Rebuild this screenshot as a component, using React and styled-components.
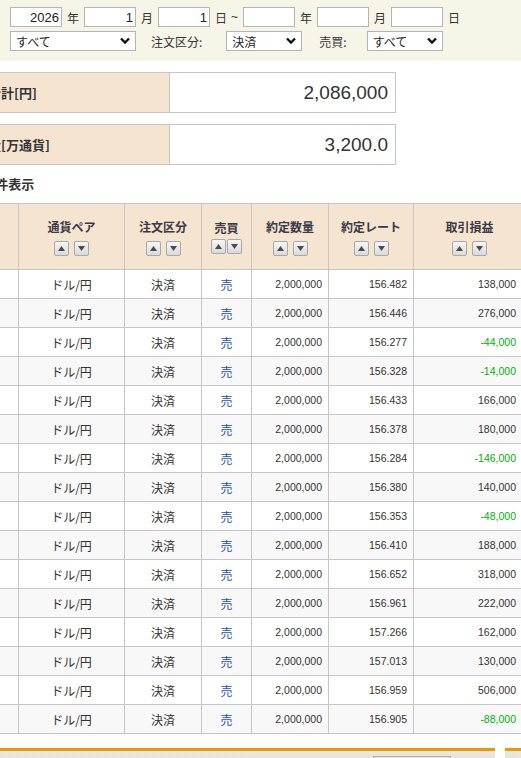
import * as React from 'react';
import styled, { createGlobalStyle } from 'styled-components';

const GlobalStyle = createGlobalStyle`
  html, body {
    margin: 0;
    padding: 0;
    background: #fff;
    overflow: hidden;
  }
  body {
    font-family: "Liberation Sans", "Noto Sans CJK JP", sans-serif;
    font-size: 12px;
    color: #333;
  }
`;

const trades = [
  ['156.482', '138,000'],
  ['156.446', '276,000'],
  ['156.277', '-44,000'],
  ['156.328', '-14,000'],
  ['156.433', '166,000'],
  ['156.378', '180,000'],
  ['156.284', '-146,000'],
  ['156.380', '140,000'],
  ['156.353', '-48,000'],
  ['156.410', '188,000'],
  ['156.652', '318,000'],
  ['156.961', '222,000'],
  ['157.266', '162,000'],
  ['157.013', '130,000'],
  ['156.959', '506,000'],
  ['156.905', '-88,000'],
];

// column widths, the first one runs off the left edge of the view
const columns = [93, 106, 77, 50, 77, 85, 112];

const Filter = styled.div`
  background: #f7f5e8;
  padding: 7px 10px 10px;
  display: flex;
  flex-direction: column;
  gap: 4px;
`;

const FilterRow = styled.div`
  display: flex;
  align-items: center;
  height: 20px;
`;

const NumInput = styled.input`
  box-sizing: border-box;
  width: 52px;
  height: 20px;
  border: 1px solid #b4b4b4;
  background: #fff;
  padding: 0 2px;
  font-family: "Liberation Sans", sans-serif;
  font-size: 13px;
  color: #222;
  text-align: right;
  outline: none;
`;

const Unit = styled.span`
  font-family: "Noto Sans CJK JP", sans-serif;
  font-size: 12px;
  color: #333;
  margin: 0 ${p => p.$gap || 5}px 0 5px;
  white-space: nowrap;
`;

const Tilde = styled.span`
  font-size: 12px;
  margin: 0 5px 0 2px;
`;

const SelectWrap = styled.div`
  position: relative;
  width: ${p => p.$width}px;
  height: 20px;
`;

const Select = styled.select`
  box-sizing: border-box;
  appearance: none;
  width: 100%;
  height: 20px;
  border: 1px solid #b4b4b4;
  border-radius: 0;
  background: #fff;
  padding: 0 18px 0 5px;
  font-family: "Noto Sans CJK JP", sans-serif;
  font-size: 12px;
  color: #222;
  outline: none;
`;

const Chevron = styled.svg`
  position: absolute;
  right: 6px;
  top: 6px;
  pointer-events: none;
`;

const FieldLabel = styled.span`
  font-family: "Noto Sans CJK JP", sans-serif;
  font-size: 12px;
  color: #333;
  margin: 0 ${p => p.$right}px 0 ${p => p.$left}px;
  white-space: nowrap;
`;

const Content = styled.div`
  margin-left: -75px;
  width: 700px;
`;

const Summary = styled.table`
  border-collapse: collapse;
  margin-top: ${p => p.$top}px;
  width: 471px;
  table-layout: fixed;
`;

const SummaryLabel = styled.th`
  width: 244px;
  height: 39px;
  box-sizing: border-box;
  background: #f5e4d0;
  border: 1px solid #c6c6c6;
  text-align: left;
  padding: 0 0 0 10px;
  font-family: "Noto Sans CJK JP", sans-serif;
  font-size: 13px;
  font-weight: bold;
  color: #333;
  white-space: nowrap;
`;

const SummaryValue = styled.td`
  height: 39px;
  border: 1px solid #c6c6c6;
  background: #fff;
  text-align: right;
  padding: 0 7px 0 0;
  font-family: "Liberation Sans", sans-serif;
  font-size: 19px;
  color: #333;
`;

const Status = styled.div`
  margin-top: 10px;
  height: 18px;
  padding-left: 55px;
  font-family: "Noto Sans CJK JP", sans-serif;
  font-size: 13px;
  font-weight: bold;
  color: #333;
  line-height: 18px;
`;

const Table = styled.table`
  margin-top: 10px;
  border-collapse: collapse;
  table-layout: fixed;
  width: ${columns.reduce((a, b) => a + b, 0)}px;
  border-top: 1px solid #c6c6c6;
`;

const HeadCell = styled.th`
  background: #f5e4d0;
  height: 65px;
  border: 1px solid #c6c6c6;
  border-top: 0;
  padding: 0;
  vertical-align: middle;
  font-family: "Noto Sans CJK JP", sans-serif;
  font-size: 12px;
  font-weight: bold;
  color: #3a3a48;
`;

const HeadTitle = styled.div`
  line-height: 16px;
  margin-top: ${p => (p.$tight ? 0 : 2)}px;
`;

const SortGroup = styled.div`
  display: flex;
  justify-content: center;
  gap: ${p => (p.$tight ? 1 : 5)}px;
  margin-top: ${p => (p.$tight ? 3 : 6)}px;
`;

const SortButton = styled.span`
  box-sizing: border-box;
  width: 15px;
  height: 15px;
  border: 1px solid #a9a9a9;
  border-radius: 2px;
  background: linear-gradient(#f7f7f7, #d9d9d9);
  display: flex;
  align-items: center;
  justify-content: center;
`;

const Row = styled.tr`
  background: ${p => (p.$odd ? '#f8f8f8' : '#fff')};
`;

const Cell = styled.td`
  height: 28px;
  border: 1px solid #c6c6c6;
  border-top-color: #d4d4d4;
  padding: 0 ${p => p.$pad || 6}px 0 6px;
  text-align: ${p => (p.$num ? 'right' : 'center')};
  font-family: ${p => (p.$num ? '"Liberation Sans", sans-serif' : '"Noto Sans CJK JP", sans-serif')};
  font-size: ${p => (p.$num ? '10.5px' : '12px')};
  color: ${p => p.$color || '#333'};
  white-space: nowrap;
  overflow: hidden;
`;

const Footer = styled.div`
  margin-top: 14px;
  display: flex;
  gap: 10px;
`;

const FooterPanel = styled.div`
  height: 20px;
  width: ${p => p.$width}px;
  border-top: 3px solid #f39500;
  background: linear-gradient(#e9e8e4, #dddcd8);
  display: flex;
  justify-content: flex-end;
  padding-right: 44px;
  box-sizing: border-box;
`;

const FooterButton = styled.div`
  margin-top: 5px;
  width: 76px;
  height: 20px;
  border: 1px solid #b0b0b0;
  border-bottom: 0;
  background: #e4e3e0;
`;

function SelectBox({ width, value }) {
  return (
    <SelectWrap $width={width}>
      <Select defaultValue={value}>
        <option>{value}</option>
      </Select>
      <Chevron width="10" height="8" viewBox="0 0 10 8">
        <path d="M1 1.5 L5 5.5 L9 1.5" fill="none" stroke="#111" strokeWidth="2.4" />
      </Chevron>
    </SelectWrap>
  );
}

function Triangle({ up }) {
  return (
    <svg width="7" height="5" viewBox="0 0 7 5">
      <path d={up ? 'M0 5 L3.5 0 L7 5 Z' : 'M0 0 L3.5 5 L7 0 Z'} fill="#4a4a4a" />
    </svg>
  );
}

function SortHead({ title, tight }) {
  return (
    <HeadCell>
      <HeadTitle $tight={tight}>{title}</HeadTitle>
      <SortGroup $tight={tight}>
        <SortButton><Triangle up /></SortButton>
        <SortButton><Triangle /></SortButton>
      </SortGroup>
    </HeadCell>
  );
}

export default function App() {
  return (
    <>
      <GlobalStyle />
      <Filter>
        <FilterRow>
          <NumInput defaultValue="2026" />
          <Unit>年</Unit>
          <NumInput defaultValue="1" />
          <Unit>月</Unit>
          <NumInput defaultValue="1" />
          <Unit $gap={2}>日</Unit>
          <Tilde>~</Tilde>
          <NumInput />
          <Unit>年</Unit>
          <NumInput />
          <Unit>月</Unit>
          <NumInput />
          <Unit>日</Unit>
        </FilterRow>
        <FilterRow>
          <SelectBox width={126} value="すべて" />
          <FieldLabel $left={15} $right={24}>注文区分:</FieldLabel>
          <SelectBox width={76} value="決済" />
          <FieldLabel $left={17} $right={20}>売買:</FieldLabel>
          <SelectBox width={76} value="すべて" />
        </FilterRow>
      </Filter>

      <Content>
        <Summary $top={11}>
          <tbody>
            <tr>
              <SummaryLabel>取引損益合計[円]</SummaryLabel>
              <SummaryValue>2,086,000</SummaryValue>
            </tr>
          </tbody>
        </Summary>
        <Summary $top={11}>
          <tbody>
            <tr>
              <SummaryLabel>約定総数量[万通貨]</SummaryLabel>
              <SummaryValue>3,200.0</SummaryValue>
            </tr>
          </tbody>
        </Summary>

        <Status>16件表示</Status>

        <Table>
          <colgroup>
            {columns.map((w, i) => <col key={i} style={{ width: w }} />)}
          </colgroup>
          <thead>
            <tr>
              <HeadCell />
              <SortHead title="通貨ペア" />
              <SortHead title="注文区分" />
              <SortHead title="売買" tight />
              <SortHead title="約定数量" />
              <SortHead title="約定レート" />
              <SortHead title="取引損益" />
            </tr>
          </thead>
          <tbody>
            {trades.map(([rate, pl], i) => (
              <Row key={i} $odd={i % 2 === 1}>
                <Cell />
                <Cell>ドル/円</Cell>
                <Cell>決済</Cell>
                <Cell $color="#1a4fc4">売</Cell>
                <Cell $num>2,000,000</Cell>
                <Cell $num>{rate}</Cell>
                <Cell $num $pad={9} $color={pl.startsWith('-') ? '#00b400' : '#333'}>
                  {pl}
                </Cell>
              </Row>
            ))}
          </tbody>
        </Table>

        <Footer>
          <FooterPanel $width={571}>
            <FooterButton />
          </FooterPanel>
          <FooterPanel $width={120} />
        </Footer>
      </Content>
    </>
  );
}
